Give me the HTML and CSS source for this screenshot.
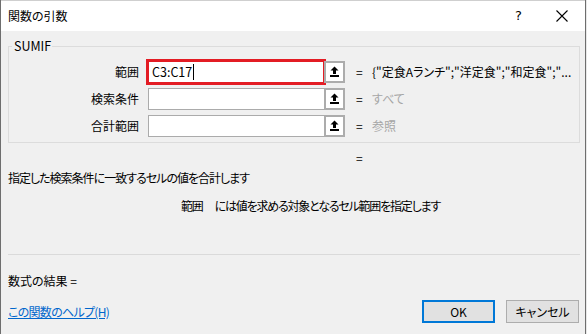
FILE: index.html
```html
<!DOCTYPE html>
<html lang="ja">
<head>
<meta charset="utf-8">
<title>関数の引数</title>
<link rel="stylesheet" href="styles.css">
</head>
<body>
<div class="window">
  <div class="titlebar">
    <span class="title">関数の引数</span>
    <span class="help">?</span>
    <span class="close">
      <svg width="12" height="12" viewBox="0 0 12 12"><path d="M0.5 0.5 L11.5 11.5 M11.5 0.5 L0.5 11.5" stroke="#000" stroke-width="1.1" fill="none"/></svg>
    </span>
  </div>
  <div class="content">
    <fieldset class="group">
      <legend>SUMIF</legend>
      <div class="row">
        <label class="label">範囲</label>
        <div class="field active">C3:C17<span class="caret"></span></div>
        <div class="pick"><svg width="9" height="11" viewBox="0 0 9 11"><path d="M4.5 0.5 L8.5 4.5 H6 V8 H3 V4.5 H0.5 Z" fill="#000"/><rect x="0" y="9" width="9" height="2" fill="#000"/></svg></div>
        <span class="eq">=</span>
        <span class="value">{"定食Aランチ";"洋定食";"和定食";"...</span>
      </div>
      <div class="row">
        <label class="label">検索条件</label>
        <div class="field"></div>
        <div class="pick"><svg width="9" height="11" viewBox="0 0 9 11"><path d="M4.5 0.5 L8.5 4.5 H6 V8 H3 V4.5 H0.5 Z" fill="#000"/><rect x="0" y="9" width="9" height="2" fill="#000"/></svg></div>
        <span class="eq">=</span>
        <span class="value muted">すべて</span>
      </div>
      <div class="row">
        <label class="label">合計範囲</label>
        <div class="field"></div>
        <div class="pick"><svg width="9" height="11" viewBox="0 0 9 11"><path d="M4.5 0.5 L8.5 4.5 H6 V8 H3 V4.5 H0.5 Z" fill="#000"/><rect x="0" y="9" width="9" height="2" fill="#000"/></svg></div>
        <span class="eq">=</span>
        <span class="value muted">参照</span>
      </div>
    </fieldset>
    <div class="total-eq">=</div>
    <div class="desc">指定した検索条件に一致するセルの値を合計します</div>
    <div class="argdesc"><span class="argname">範囲</span><span>には値を求める対象となるセル範囲を指定します</span></div>
    <div class="separator"></div>
    <div class="result">数式の結果 =</div>
    <div class="footer">
      <a class="helplink" href="#">この関数のヘルプ(H)</a>
      <div class="buttons">
        <button class="btn primary">OK</button>
        <button class="btn">キャンセル</button>
      </div>
    </div>
  </div>
</div>
</body>
</html>
```
FILE: styles.css
```css
* { box-sizing: border-box; }
html, body {
  margin: 0;
  padding: 0;
}
body {
  width: 587px;
  height: 334px;
  overflow: hidden;
  background: #e8e8e8;
  font-family: "Noto Sans CJK JP", "Noto Sans", sans-serif;
  font-size: 12px;
  line-height: 16px;
  color: #000;
  font-feature-settings: "palt";
}
.window {
  width: 586px;
  height: 334px;
  border-left: 1px solid #6e6e6e;
  border-right: 1px solid #6e6e6e;
  background: #f0f0f0;
  display: flex;
  flex-direction: column;
}
.titlebar {
  height: 31px;
  background: #fff;
  border-top: 1px solid #cfcfcf;
  display: flex;
  align-items: center;
  padding-left: 7px;
}
.title {
  flex: 1;
  font-size: 12px;
  padding-bottom: 1px;
}
.help {
  width: 8px;
  font-family: "DejaVu Sans", sans-serif;
  font-size: 13px;
  margin-right: 33px;
}
.close {
  display: flex;
  margin-right: 17px;
}
.content {
  padding: 0 7px 0 7px;
  display: flex;
  flex-direction: column;
}
.group {
  margin: 7px 0 0 0;
  padding: 7px 0 0 0;
  width: 572px;
  border: 1px solid #dcdcdc;
  min-width: 0;
}
.group legend {
  padding: 0 1px 0 2px;
  margin-left: 3px;
  font-size: 12.5px;
  line-height: 16px;
}
.row {
  display: flex;
  align-items: center;
  height: 22px;
  margin-bottom: 5px;
}
.label {
  width: 130px;
  text-align: right;
  margin-right: 9px;
}
.field {
  width: 176px;
  height: 22px;
  background: #fff;
  border: 1px solid #ababab;
  border-right: none;
  padding-left: 4px;
  display: flex;
  align-items: center;
  font-size: 12.5px;
}
.field.active {
  border: 1px solid #e31c24;
  outline: 2px solid #e31c24;
  padding-left: 3px;
}
.caret {
  display: inline-block;
  width: 1px;
  height: 16px;
  background: #000;
  margin-left: 1px;
}
.pick {
  width: 21px;
  height: 22px;
  border: 2px solid #acacac;
  background: #fff;
  display: flex;
  align-items: center;
  justify-content: center;
  padding-bottom: 1px;
}
.eq {
  margin-left: 11px;
  width: 16px;
}
.value {
  white-space: nowrap;
}
.muted { color: #a6a6a6; }
.total-eq {
  margin: 7px 0 0 348px;
}
.desc {
  margin-top: 4px;
  letter-spacing: -1px;
}
.argdesc {
  margin-top: 12px;
  padding-left: 173px;
  display: flex;
  letter-spacing: -1.2px;
}
.argname {
  margin-right: 12px;
}
.separator {
  margin-top: 40px;
  height: 1px;
  background: #dadada;
  width: 572px;
}
.result {
  margin-top: 18px;
}
.footer {
  margin-top: 11px;
  display: flex;
  align-items: center;
  justify-content: space-between;
  width: 571px;
}
.helplink {
  color: #0066cc;
  text-decoration: underline;
  margin-top: 1px;
  letter-spacing: -0.7px;
}
.buttons {
  display: flex;
  gap: 11px;
}
.btn {
  width: 73px;
  height: 23px;
  background: #e1e1e1;
  border: 1px solid #adadad;
  font-family: "Noto Sans CJK JP", "Noto Sans", sans-serif;
  font-size: 12px;
  font-feature-settings: "palt";
  color: #000;
  padding: 0;
}
.btn.primary {
  border: 2px solid #0078d7;
}
```
